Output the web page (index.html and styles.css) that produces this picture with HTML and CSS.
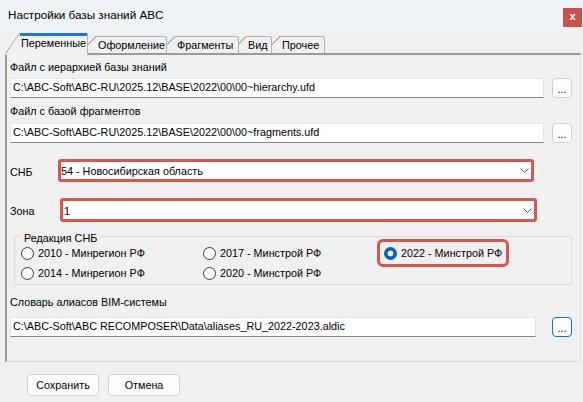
FILE: index.html
```html
<!DOCTYPE html>
<html lang="ru">
<head>
  <meta charset="UTF-8" />
  <title>Настройки базы знаний ABC</title>
  <link rel="stylesheet" href="styles.css">
</head>
<body>
  <div class="window">
    <div class="titlebar">
      <span class="titlebar__text">Настройки базы знаний ABC</span>
      <span class="titlebar__close">x</span>
    </div>

    <div class="tabs">
      <div class="tab tab--active tab--vars">Переменные</div>
      <div class="tab tab--design">Оформление</div>
      <div class="tab tab--frags">Фрагменты</div>
      <div class="tab tab--view">Вид</div>
      <div class="tab tab--misc">Прочее</div>
    </div>

    <div class="panel">
      <div class="label label--first">Файл с иерархией базы знаний</div>
      <div class="field-row field-row--top">
        <div class="input input--wide">C:\ABC-Soft\ABC-RU\2025.12\BASE\2022\00\00~hierarchy.ufd</div>
        <button class="browse">...</button>
      </div>

      <div class="label label--second">Файл с базой фрагментов</div>
      <div class="field-row field-row--mid">
        <div class="input input--wide">C:\ABC-Soft\ABC-RU\2025.12\BASE\2022\00\00~fragments.ufd</div>
        <button class="browse">...</button>
      </div>

      <div class="combo-row combo-row--snb">
        <span class="combo-row__label">СНБ</span>
        <div class="combo combo--snb">
          <span class="combo__value">54 - Новосибирская область</span>
          <svg class="combo__arrow" width="9" height="5" viewBox="0 0 9 5"><path d="M0.5 0.5 L4.5 4.5 L8.5 0.5" fill="none" stroke="#5a5a5a" stroke-width="1"/></svg>
        </div>
      </div>

      <div class="combo-row combo-row--zone">
        <span class="combo-row__label">Зона</span>
        <div class="combo combo--zone">
          <span class="combo__value">1</span>
          <svg class="combo__arrow" width="9" height="5" viewBox="0 0 9 5"><path d="M0.5 0.5 L4.5 4.5 L8.5 0.5" fill="none" stroke="#5a5a5a" stroke-width="1"/></svg>
        </div>
      </div>

      <fieldset class="group">
        <legend class="group__title">Редакция СНБ</legend>
        <div class="radios">
          <label class="radio"><span class="radio__dot"></span>2010 - Минрегион РФ</label>
          <label class="radio"><span class="radio__dot"></span>2017 - Минстрой РФ</label>
          <label class="radio radio--marked"><span class="radio__dot radio__dot--on"></span>2022 - Минстрой РФ</label>
          <label class="radio"><span class="radio__dot"></span>2014 - Минрегион РФ</label>
          <label class="radio"><span class="radio__dot"></span>2020 - Минстрой РФ</label>
        </div>
      </fieldset>

      <div class="label label--third">Словарь алиасов BIM-системы</div>
      <div class="field-row field-row--bottom">
        <div class="input input--alias">C:\ABC-Soft\ABC RECOMPOSER\Data\aliases_RU_2022-2023.aldic</div>
        <button class="browse browse--focus">...</button>
      </div>
    </div>

    <div class="actions">
      <button class="button">Сохранить</button>
      <button class="button">Отмена</button>
    </div>
  </div>
</body>
</html>
```

FILE: styles.css
```css
* {
  box-sizing: border-box;
  margin: 0;
  padding: 0;
}
body {
  width: 583px;
  height: 402px;
  overflow: hidden;
  background: #f0f0f0;
  font-family: 'Liberation Sans', Arial, sans-serif;
  font-size: 10.8px;
  line-height: 16px;
  color: #000;
}
button {
  font-family: inherit;
  font-size: 10.8px;
  color: #000;
}

/* title bar */
.titlebar {
  height: 31px;
  display: flex;
  justify-content: space-between;
  align-items: flex-start;
  padding: 0 1px 0 8px;
  background: #eef2f4;
}
.titlebar__text {
  margin-top: 7px;
  font-size: 11.7px;
}
.titlebar__close {
  width: 19px;
  height: 19px;
  margin-top: 8px;
  display: flex;
  align-items: center;
  justify-content: center;
  background: #c9504f;
  color: #fff;
  font-weight: bold;
  font-size: 11px;
  line-height: 1;
  padding-bottom: 2px;
}

/* tabs */
.tabs {
  height: 22px;
  margin-top: 2px;
  padding-left: 20px;
  display: flex;
  align-items: flex-start;
  position: relative;
  z-index: 2;
}
.tab {
  position: relative;
  height: 17px;
  margin-top: 3px;
  margin-left: 9px;
  padding-left: 1px;
  background: #f0f0f0;
  border-top: 1px solid #b4b4b4;
  border-right: 1px solid #b4b4b4;
  border-top-right-radius: 3px;
  line-height: 16px;
  white-space: nowrap;
}
.tab::before {
  content: '';
  position: absolute;
  left: -17px;
  top: -1px;
  width: 17px;
  height: 17px;
  background: linear-gradient(to bottom right, transparent calc(50% - 0.8px), #b4b4b4 calc(50% - 0.8px), #b4b4b4 calc(50% + 0.2px), #f0f0f0 calc(50% + 0.2px));
}
.tab--vars { width: 68px; z-index: 6; }
.tab--design { width: 70px; z-index: 5; }
.tab--frags { width: 63px; z-index: 4; }
.tab--view { width: 25px; z-index: 3; margin-left: 8px; }
.tab--misc { width: 44px; z-index: 2; }
.tab--active {
  height: 22px;
  margin-top: 0;
  margin-left: 0;
  padding-top: 0;
  line-height: 15px;
  border-top: 3px solid #1f74d6;
  border-top-left-radius: 0;
  border-top-right-radius: 2px;
}
.tab--active::before {
  left: -15px;
  top: -3px;
  width: 15px;
  height: 22px;
}

/* page panel */
.panel {
  position: relative;
  z-index: 1;
  margin: -2px 2px 0 5px;
  height: 309px;
  padding: 4px 0 0 3px;
  border-top: 2px solid #9b9b9b;
  border-left: 2px solid #9b9b9b;
  border-right: 1px solid #dcdcdc;
  border-bottom: 1px solid #dcdcdc;
}
.label--second { margin-top: 5px; }
.label--third { margin-top: 9px; }

.field-row {
  display: flex;
  align-items: center;
  height: 20px;
  padding-right: 8px;
}
.field-row--top { margin-top: 3px; }
.field-row--mid { margin-top: 4px; }
.field-row--bottom { margin-top: 7px; }

.input {
  height: 20px;
  padding-left: 2px;
  background: #fff;
  border: 1px solid #e6e6e6;
  border-bottom-color: #858585;
  line-height: 17px;
  white-space: nowrap;
  overflow: hidden;
}
.input--wide { width: 534px; }
.input--alias { width: 526px; }

.browse {
  width: 20px;
  height: 20px;
  margin-left: auto;
  background: #fdfdfd;
  border: 1px solid #d0d0d0;
  border-radius: 4px;
  line-height: 14px;
  padding-top: 2px;
}
.browse--focus {
  border-color: #1a6fc9;
}

/* combo boxes */
.combo-row {
  display: flex;
  align-items: center;
  margin-top: 16px;
}
.combo-row__label {
  width: 48px;
  padding-top: 2px;
}
.combo {
  display: flex;
  align-items: center;
  justify-content: space-between;
  height: 23px;
  padding: 0 2px 0 0;
  background: #fff;
  border: 3px solid #d6574e;
  border-radius: 3px;
}
.combo--snb { width: 476px; }
.combo--zone {
  width: 477px;
  height: 24px;
  margin-left: 2px;
  padding-left: 1px;
}
.combo__value {
  padding-top: 1px;
}

/* radio group */
.group {
  margin: 6px 8px 0 4px;
  padding: 0 0 1px 6px;
  border: 1px solid #dcdcdc;
}
.group__title {
  padding: 4px 3px 0;
  line-height: 13px;
}
.radios {
  display: grid;
  grid-template-columns: 182px 181px 1fr;
  grid-auto-rows: 20px;
  margin-top: -2px;
  line-height: 14px;
}
.radio {
  display: flex;
  align-items: center;
  gap: 4px;
  white-space: nowrap;
}
.radio--marked {
  justify-self: start;
  height: 18px;
  margin: 1px -2px 0;
  padding: 0 2px;
  outline: 3px solid #d6574e;
  outline-offset: 2px;
  border-radius: 1px;
}
.radio__dot {
  width: 13px;
  height: 13px;
  flex: none;
  border: 1px solid #3c3c3c;
  border-radius: 50%;
  background: #fbfbfb;
}
.radio__dot--on {
  border: none;
  background: radial-gradient(circle, #fff 0, #fff 2.6px, #0a64be 3.2px);
}

/* dialog buttons */
.actions {
  display: flex;
  gap: 9px;
  margin-top: 12px;
  padding-left: 27px;
}
.button {
  width: 72px;
  height: 22px;
  background: #fdfdfd;
  border: 1px solid #d0d0d0;
  border-radius: 4px;
}
```
